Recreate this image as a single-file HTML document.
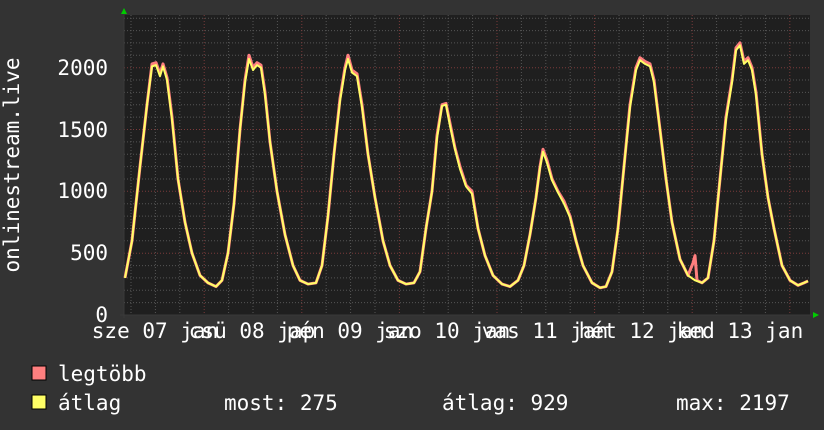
<!DOCTYPE html>
<html><head><meta charset="utf-8"><style>
html,body{margin:0;padding:0;background:#333333;}
svg{display:block;}
text{font-family:"DejaVu Sans Mono","Liberation Mono",monospace;fill:#ffffff;font-size:21px;}
</style></head><body>
<svg width="824" height="430" xmlns="http://www.w3.org/2000/svg">
<rect x="0" y="0" width="824" height="430" fill="#333333"/>
<rect x="124" y="15" width="686" height="300" fill="#1f1f1f"/>
<g stroke="#555" stroke-width="1" stroke-dasharray="1,2">
<path d="M124 302.6H810M124 290.3H810M124 277.9H810M124 265.6H810M124 240.8H810M124 228.5H810M124 216.1H810M124 203.7H810M124 179H810M124 166.6H810M124 154.2H810M124 141.9H810M124 117.1H810M124 104.8H810M124 92.4H810M124 80H810M124 55.3H810M124 42.9H810M124 30.6H810M124 18.2H810"/>
<path d="M131 15V315M155.4 15V315M179.8 15V315M228.6 15V315M253 15V315M277.4 15V315M326.2 15V315M350.6 15V315M375 15V315M423.8 15V315M448.2 15V315M472.6 15V315M521.4 15V315M545.8 15V315M570.2 15V315M619 15V315M643.4 15V315M667.8 15V315M716.6 15V315M741 15V315M765.4 15V315"/>
</g>
<g stroke="#7a3a3a" stroke-width="1" stroke-dasharray="1,2">
<path d="M124 253.2H810M124 191.3H810M124 129.5H810M124 67.7H810"/>
<path d="M204.2 15V315M301.8 15V315M399.4 15V315M497 15V315M594.6 15V315M692.2 15V315M789.8 15V315"/>
</g>
<path d="M124 10V318M120 315H816" stroke="#3a3a3a" stroke-width="1" fill="none"/>
<polygon points="121,14 127,14 124,8" fill="#00cc00"/>
<polygon points="813,312 813,318 819,315" fill="#00cc00"/>
<g transform="translate(0,315) scale(1,-0.1237)">
<polyline fill="none" stroke="#ff7f7f" stroke-width="3" vector-effect="non-scaling-stroke" stroke-linejoin="round" points="125,300 132,600 140,1200 147,1700 152,2030 156,2040 160,1950 163,2030 167,1920 172,1600 178,1100 185,750 192,500 200,320 208,260 216,230 222,280 228,500 234,900 240,1500 245,1900 249,2100 253,2000 257,2040 261,2020 265,1800 270,1400 277,1000 285,650 293,400 300,280 308,250 316,260 322,400 328,800 334,1300 340,1750 345,2000 348,2100 352,1980 357,1950 362,1700 368,1300 375,950 383,600 390,400 398,280 406,250 414,260 420,350 426,700 432,1000 437,1450 442,1700 446,1710 450,1550 455,1350 460,1200 466,1050 472,1000 478,700 485,480 493,320 502,250 510,230 518,280 524,400 530,650 536,950 540,1200 543,1340 547,1250 552,1100 558,1000 564,920 570,800 576,600 583,400 592,260 600,220 606,230 612,350 618,700 624,1200 630,1700 636,2000 640,2080 645,2050 650,2030 654,1900 660,1500 666,1100 672,750 680,450 688,320 693,420 695,480 697,280 702,260 708,300 714,600 720,1100 726,1600 732,1900 736,2160 740,2200 744,2050 748,2080 752,2000 756,1800 762,1300 768,950 774,700 782,400 790,280 798,240 804,260 808,275"/>
<polyline fill="none" stroke="#ffff66" stroke-width="2" vector-effect="non-scaling-stroke" stroke-linejoin="round" points="125,300 132,600 140,1200 147,1700 152,2010 156,2020 160,1930 163,2010 167,1900 172,1580 178,1100 185,750 192,500 200,320 208,260 216,230 222,280 228,500 234,900 240,1500 245,1880 249,2070 253,1980 257,2020 261,2000 265,1780 270,1400 277,1000 285,650 293,400 300,280 308,250 316,260 322,400 328,800 334,1300 340,1730 345,1980 348,2070 352,1960 357,1930 362,1680 368,1300 375,950 383,600 390,400 398,280 406,250 414,260 420,350 426,700 432,1000 437,1430 442,1690 446,1700 450,1530 455,1340 460,1180 466,1040 472,980 478,700 485,480 493,320 502,250 510,230 518,280 524,400 530,650 536,950 540,1190 543,1320 547,1230 552,1090 558,990 564,900 570,790 576,600 583,400 592,260 600,220 606,230 612,350 618,700 624,1200 630,1680 636,1980 640,2060 645,2030 650,2010 654,1880 660,1500 666,1100 672,750 680,450 688,320 695,280 702,260 708,300 714,600 720,1100 726,1580 732,1880 736,2140 740,2180 744,2030 748,2060 752,1980 756,1780 762,1300 768,950 774,700 782,400 790,280 798,240 804,260 808,275"/>
</g>
<g text-anchor="end">
<text x="108" y="322">0</text>
<text x="108" y="260">500</text>
<text x="108" y="198">1000</text>
<text x="108" y="137">1500</text>
<text x="108" y="75">2000</text>
</g>
<text transform="translate(19,165) rotate(-90)" text-anchor="middle">onlinestream.live</text>
<g text-anchor="middle">
<text x="155" y="338">sze 07 jan</text>
<text x="252" y="338">csü 08 jap</text>
<text x="350" y="338">pén 09 jan</text>
<text x="447" y="338">szo 10 jan</text>
<text x="545" y="338">vas 11 jan</text>
<text x="642" y="338">hét 12 jan</text>
<text x="740" y="338">ked 13 jan</text>
</g>
<rect x="32" y="366" width="14" height="14" fill="#ff7f7f" stroke="#000" stroke-width="1"/>
<rect x="32" y="395" width="14" height="14" fill="#ffff66" stroke="#000" stroke-width="1"/>
<text x="58" y="381">legtöbb</text>
<text x="58" y="410">átlag</text>
<text x="224" y="410">most: 275</text>
<text x="442" y="410">átlag: 929</text>
<text x="676" y="410">max: 2197</text>
</svg>
</body></html>
